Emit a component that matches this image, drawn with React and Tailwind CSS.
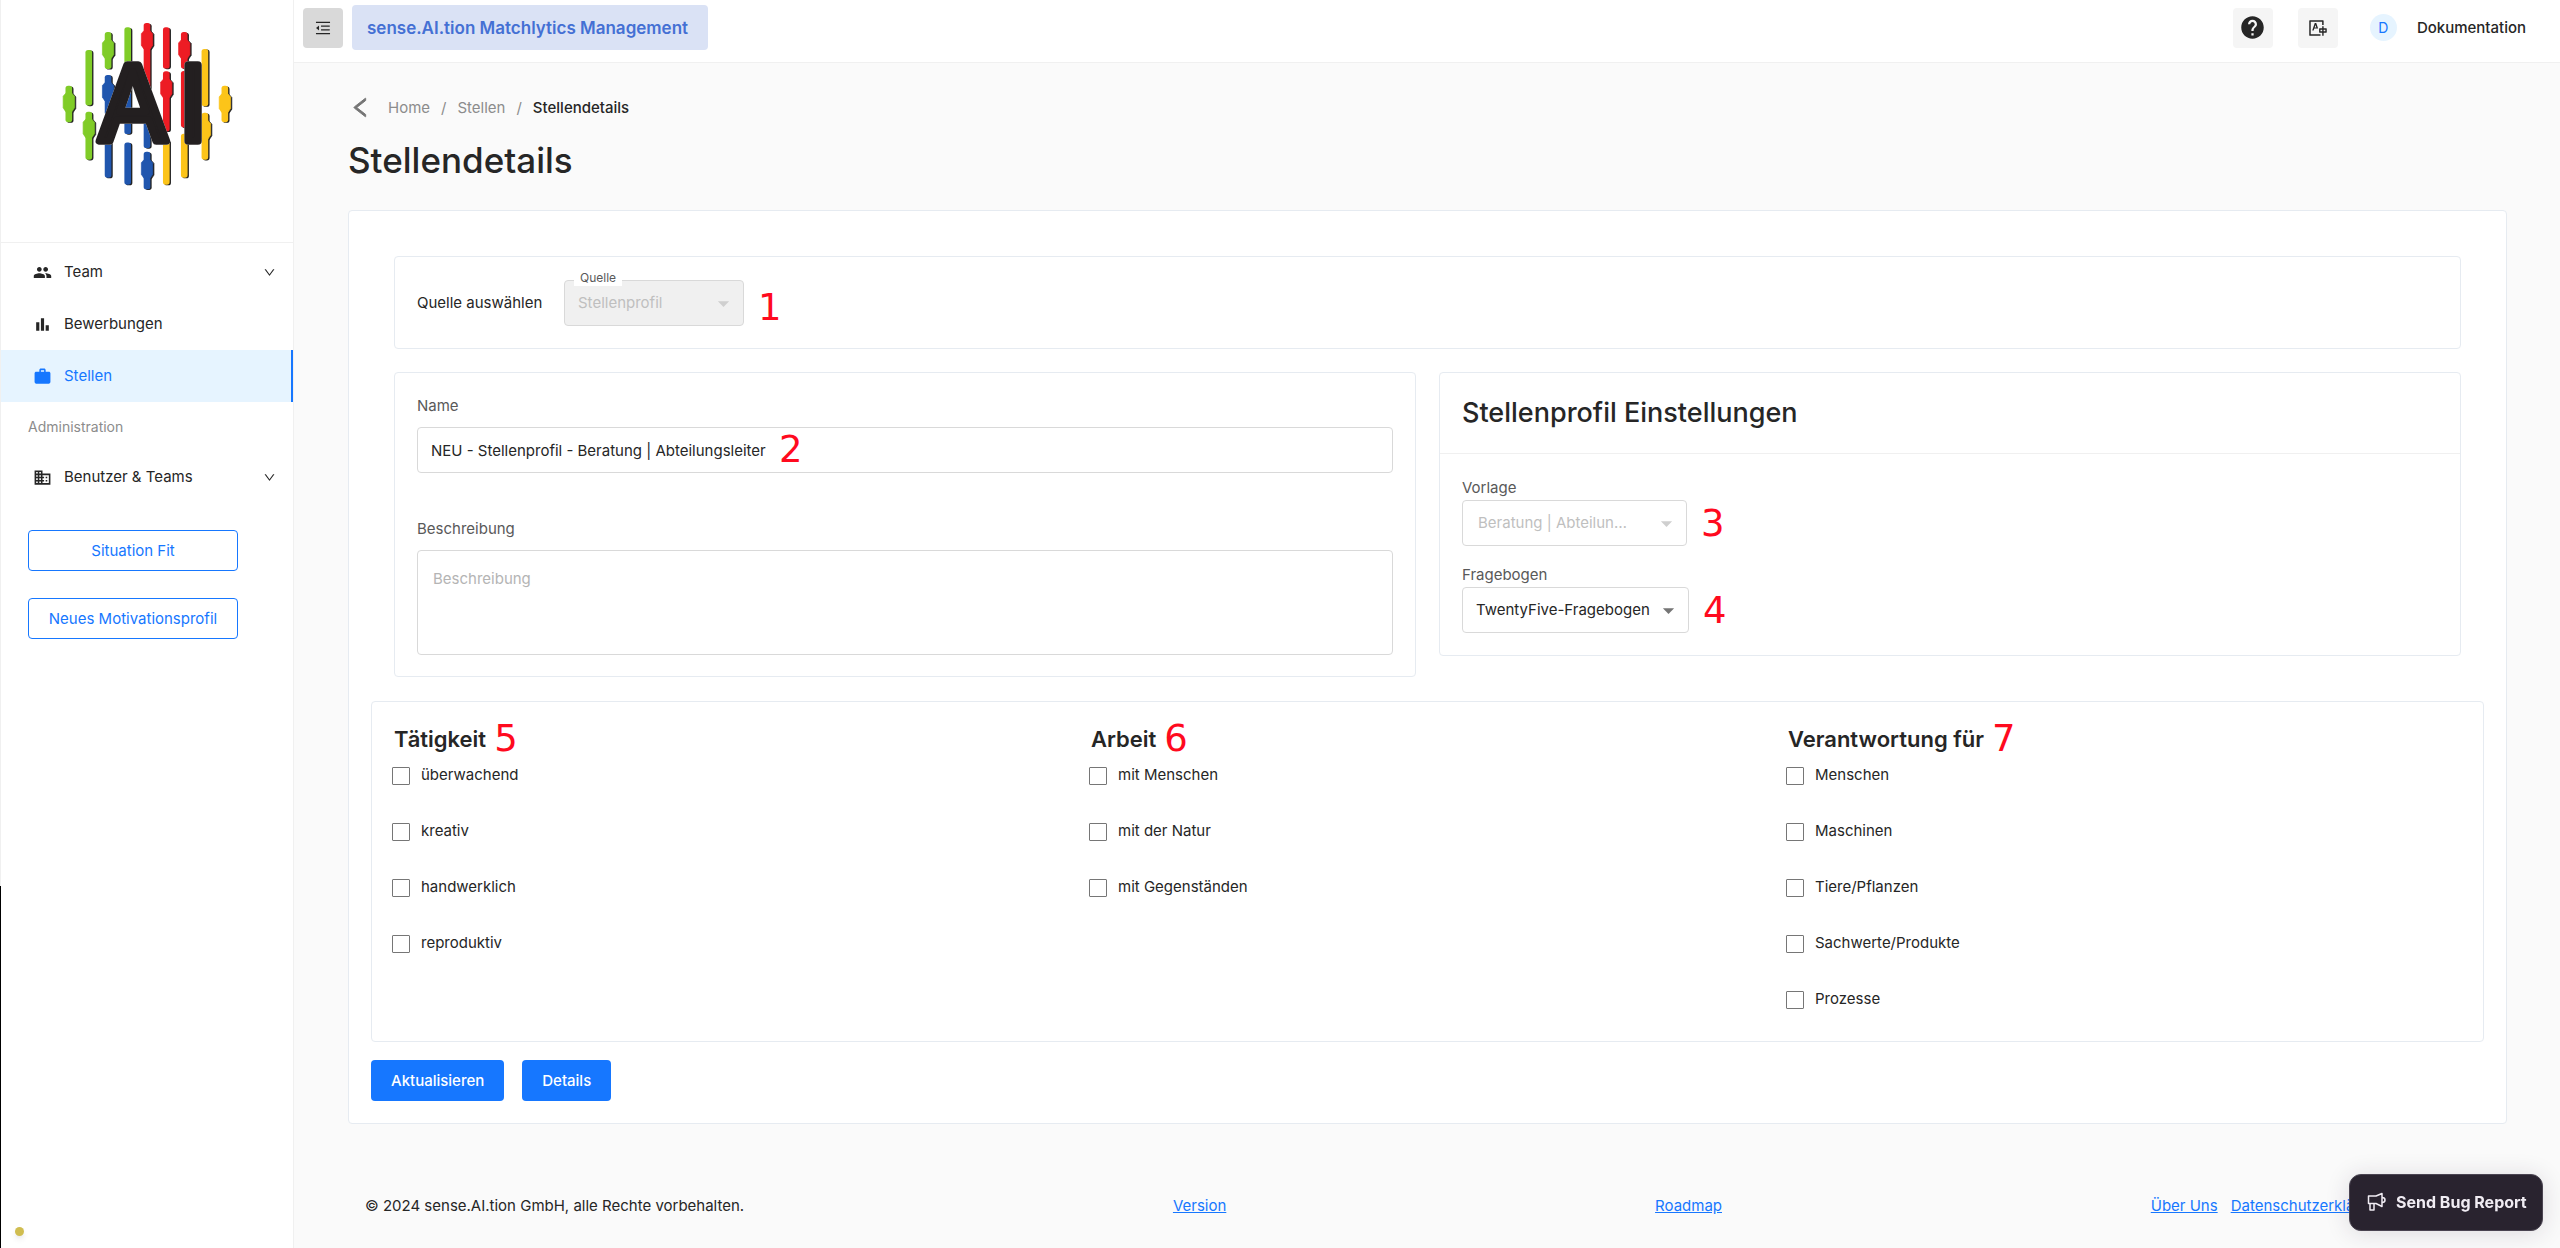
import { useState } from "react";
import {
  MdPeople,
  MdBarChart,
  MdWork,
  MdOutlineDomain,
  MdHelp,
  MdArrowDropDown,
} from "react-icons/md";
import { AiOutlineMenuFold, AiOutlineDown, AiOutlineTranslation, AiOutlineLeft } from "react-icons/ai";

const GREEN = "#80cc28";
const RED = "#ed1c24";
const BLUE = "#2056ae";
const YELLOW = "#fcc419";

// x, top, bottom, color, top of the wide part (persons only)
const logoBars = [
  [206, 258, 367, GREEN, 280],
  [266, 150, 317, GREEN],
  [266, 336, 480, GREEN, 358],
  [324, 96, 207, GREEN, 120],
  [324, 225, 345, BLUE, 248],
  [324, 400, 534, BLUE],
  [383, 82, 200, GREEN],
  [383, 240, 403, BLUE],
  [383, 428, 555, BLUE],
  [441, 69, 270, RED, 92],
  [441, 330, 445, BLUE],
  [441, 456, 569, BLUE, 480],
  [499, 82, 206, RED],
  [499, 214, 395, RED, 238],
  [499, 420, 555, YELLOW],
  [553, 96, 206, RED, 120],
  [553, 213, 383, RED],
  [553, 402, 534, YELLOW],
  [615, 147, 319, YELLOW],
  [615, 339, 480, YELLOW, 362],
  [675, 258, 367, YELLOW, 282],
];

function LogoShapes({ shadow }) {
  return logoBars.map(([x, top, bottom, color, body], i) => (
    <g key={i} fill={shadow ? "#222" : color}>
      <rect x={x - 10} y={top} width="20" height={bottom - top} rx="8" />
      {body && (
        <path
          d={`M${x - 9} ${body}h18l8 9v35l-8 12h-18l-8-12v-35z`}
          stroke={shadow ? "#222" : color}
          strokeWidth="2"
          strokeLinejoin="round"
        />
      )}
    </g>
  ));
}

function Logo() {
  return (
    <svg viewBox="180 60 525 520" className="h-[173px] w-[175px]" role="img" aria-label="AI">
      <g transform="translate(4 2)">
        <LogoShapes shadow />
      </g>
      <LogoShapes />
      <text
        x="290 537"
        y="425"
        fontSize="315"
        fontWeight="400"
        fill="#231f20"
        stroke="#231f20"
        strokeWidth="23"
        strokeLinejoin="round"
        className="font-['Inter'] drop-shadow-[0_0_2px_white]"
      >
        AI
      </text>
    </svg>
  );
}

function Marker({ children, className = "" }) {
  return (
    <span className={`font-['DejaVu_Sans'] text-[37px] leading-none text-[#ff0a1e] ${className}`}>
      {children}
    </span>
  );
}

function NavItem({ icon: Icon, label, active, expandable }) {
  return (
    <a
      href="#"
      className={`flex h-[52px] items-center pr-[17px] pl-8 ${
        active ? "border-r-2 border-[#1677ff] bg-[#e6f4ff] text-[#1677ff]" : "text-[#262626]"
      }`}
    >
      <Icon size={19} />
      <span className="ml-3 flex-1">{label}</span>
      {expandable && <AiOutlineDown size={13} className="text-[#262626]" />}
    </a>
  );
}

function Sidebar() {
  return (
    <aside className="flex shrink-0">
      <div className="flex w-px flex-col">
        <div className="h-[71%] bg-[#f0f0f0]" />
        <div className="flex-1 bg-black" />
      </div>
      <div className="flex w-[293px] flex-col border-r border-[#f0f0f0] bg-white">
        <div className="flex h-[243px] justify-center border-b border-[#f0f0f0] pt-5">
          <Logo />
        </div>
        <nav className="pt-[3px]">
          <NavItem icon={MdPeople} label="Team" expandable />
          <NavItem icon={MdBarChart} label="Bewerbungen" />
          <NavItem icon={MdWork} label="Stellen" active />
          <p className="flex h-[49px] items-center pl-[27px] text-[14px] text-[#8c8c8c]">Administration</p>
          <NavItem icon={MdOutlineDomain} label="Benutzer & Teams" expandable />
        </nav>
        <div className="mt-[27px] ml-[27px] flex w-[210px] flex-col gap-[27px] self-start">
          <button type="button" className="h-[41px] rounded border border-[#1677ff] text-[#1677ff]">
            Situation Fit
          </button>
          <button type="button" className="h-[41px] rounded border border-[#1677ff] text-[#1677ff]">
            Neues Motivationsprofil
          </button>
        </div>
        <div className="mt-auto mb-3 ml-[14px] size-[9px] rounded-full bg-[#d0bd50] shadow-md" />
      </div>
    </aside>
  );
}

function Header() {
  return (
    <header className="flex h-[63px] items-center border-b border-[#f0f0f0] bg-white pr-[34px] pb-[7px] pl-[9px]">
      <button type="button" aria-label="Menü" className="flex size-10 items-center justify-center rounded bg-[#d9d9d9]">
        <AiOutlineMenuFold size={18} />
      </button>
      <div className="ml-[9px] flex h-[45px] items-center rounded bg-[#dae2f5] pr-5 pl-[15px] text-[17px] font-semibold text-[#4470d4]">
        sense.AI.tion Matchlytics Management
      </div>
      <div className="ml-auto flex items-center">
        <button type="button" aria-label="Hilfe" className="flex size-10 items-center justify-center rounded bg-[#f5f5f5]">
          <MdHelp size={27} />
        </button>
        <button type="button" aria-label="Sprache" className="ml-[25px] flex size-10 items-center justify-center rounded bg-[#f5f5f5]">
          <AiOutlineTranslation size={20} />
        </button>
        <span className="ml-8 flex size-[27px] items-center justify-center rounded-full bg-[#e6f4ff] text-[14px] text-[#1677ff]">
          D
        </span>
        <span className="ml-5 font-medium">Dokumentation</span>
      </div>
    </header>
  );
}

function SelectBox({ id, option, disabled, className = "", selectClass = "" }) {
  return (
    <div className={`relative ${className}`}>
      <select
        id={id}
        disabled={disabled}
        className={`h-[46px] w-full appearance-none truncate rounded border border-[#d9d9d9] opacity-100 ${selectClass}`}
      >
        <option>{option}</option>
      </select>
      <MdArrowDropDown
        size={27}
        className={`pointer-events-none absolute top-[10px] right-[7px] ${disabled ? "text-[#cfcfcf]" : "text-[#757575]"}`}
      />
    </div>
  );
}

function SourceCard() {
  return (
    <section className="flex items-center rounded border border-[#e6ebf1] px-[22px] pt-[23px] pb-[22px]">
      <label htmlFor="quelle" className="w-[147px]">
        Quelle auswählen
      </label>
      <div className="relative">
        <SelectBox
          id="quelle"
          option="Stellenprofil"
          disabled
          className="w-[180px]"
          selectClass="bg-[#f0f0f0] pl-[13px] pr-9 text-[#bfbfbf]"
        />
        <span className="absolute -top-[10px] left-[10px] bg-white px-[6px] text-[12px] leading-4 text-[#595959]">
          Quelle
        </span>
      </div>
      <Marker className="mt-2 ml-[14px]">1</Marker>
    </section>
  );
}

function DetailsCard() {
  return (
    <section className="rounded border border-[#e6ebf1] px-[22px] pt-[21px] pb-[21px]">
      <label htmlFor="name" className="block text-[#595959]">
        Name
      </label>
      <div className="relative mt-[9px]">
        <input
          id="name"
          type="text"
          defaultValue="NEU - Stellenprofil - Beratung | Abteilungsleiter"
          className="h-[46px] w-full rounded border border-[#d9d9d9] px-[13px]"
        />
        <Marker className="absolute top-1 left-[362px]">2</Marker>
      </div>
      <label htmlFor="beschreibung" className="mt-[44px] block text-[#595959]">
        Beschreibung
      </label>
      <textarea
        id="beschreibung"
        placeholder="Beschreibung"
        className="mt-[9px] block h-[105px] w-full resize-none rounded border border-[#d9d9d9] px-[15px] py-4 placeholder:text-[#b4b4b4]"
      />
    </section>
  );
}

function SettingsCard() {
  return (
    <section className="self-start rounded border border-[#e6ebf1]">
      <h2 className="border-b border-[#f0f0f0] px-[22px] py-6 text-[27px] leading-8 font-medium">
        Stellenprofil Einstellungen
      </h2>
      <div className="px-[22px] py-[22px]">
        <label htmlFor="vorlage" className="block text-[#595959]">
          Vorlage
        </label>
        <div className="flex items-center">
          <SelectBox
            id="vorlage"
            option="Beratung | Abteilungsleiter"
            disabled
            className="w-[225px]"
            selectClass="bg-white pl-[15px] pr-[52px] text-[#bfbfbf]"
          />
          <Marker className="ml-[14px]">3</Marker>
        </div>
        <label htmlFor="fragebogen" className="mt-[17px] block text-[#595959]">
          Fragebogen
        </label>
        <div className="flex items-center">
          <SelectBox
            id="fragebogen"
            option="TwentyFive-Fragebogen"
            className="w-[227px]"
            selectClass="bg-white pl-[13px] pr-8"
          />
          <Marker className="ml-[14px]">4</Marker>
        </div>
      </div>
    </section>
  );
}

const groups = [
  { title: "Tätigkeit", marker: "5", options: ["überwachend", "kreativ", "handwerklich", "reproduktiv"] },
  { title: "Arbeit", marker: "6", options: ["mit Menschen", "mit der Natur", "mit Gegenständen"] },
  {
    title: "Verantwortung für",
    marker: "7",
    options: ["Menschen", "Maschinen", "Tiere/Pflanzen", "Sachwerte/Produkte", "Prozesse"],
  },
];

function CheckboxGroups() {
  const [checked, setChecked] = useState({});

  return (
    <section className="mt-6 grid grid-cols-3 rounded border border-[#e6ebf1] pt-[18px] pb-1 pl-5">
      {groups.map((group) => (
        <div key={group.title}>
          <h3 className="flex h-[37px] items-center gap-2 pl-[2px] text-[22px] font-semibold">
            {group.title}
            <Marker className="font-normal">{group.marker}</Marker>
          </h3>
          {group.options.map((option) => {
            const key = `${group.title}-${option}`;
            return (
              <label key={key} className="flex h-14 items-start gap-[11px] pt-2 leading-5">
                <input
                  type="checkbox"
                  checked={!!checked[key]}
                  onChange={(e) => setChecked({ ...checked, [key]: e.target.checked })}
                  className="mt-[2px] size-[18px] appearance-none rounded-[1px] border border-[#767676] bg-white checked:bg-[#1677ff]"
                />
                {option}
              </label>
            );
          })}
        </div>
      ))}
    </section>
  );
}

function Footer() {
  return (
    <footer className="mt-auto flex justify-between px-[17px] pb-[30px]">
      <span>© 2024 sense.AI.tion GmbH, alle Rechte vorbehalten.</span>
      <a href="#" className="text-[#1677ff] underline">Version</a>
      <a href="#" className="text-[#1677ff] underline">Roadmap</a>
      <div className="flex gap-[13px] pr-[103px]">
        <a href="#" className="text-[#1677ff] underline">Über Uns</a>
        <a href="#" className="text-[#1677ff] underline">Datenschutzerklärung</a>
      </div>
    </footer>
  );
}

function BugReportButton() {
  return (
    <button
      type="button"
      className="fixed right-[17px] bottom-[17px] flex h-[57px] w-[194px] items-center gap-[9px] rounded-xl border border-[#4a4451] bg-[#29232f] pb-[2px] pl-[17px] text-[16px] font-bold text-[#f0ecf3] shadow-[0_2px_24px_rgba(40,30,60,0.14)]"
    >
      <svg viewBox="0 0 20 20" className="size-5" fill="none" stroke="currentColor" strokeWidth="1.5" strokeLinejoin="round">
        <path d="M1.5 4h7.500l6-2.500v13L9 11.500H1.500z" />
        <path d="M3 11.500v6.500h4v-6.500" />
        <path d="M15 5.500c4 0 4 5 0 5" />
      </svg>
      Send Bug Report
    </button>
  );
}

export default function App() {
  return (
    <div className="flex min-h-screen bg-[#fafafa] font-['Inter',sans-serif] text-[15px] leading-6 text-[#262626]">
      <Sidebar />
      <div className="flex min-w-0 flex-1 flex-col">
        <Header />
        <main className="flex flex-1 flex-col pt-8 pr-[53px] pl-[54px]">
          <nav className="flex items-center gap-[11px] text-[#8c8c8c]">
            <button type="button" aria-label="Zurück" className="mr-1 text-[#757575]">
              <AiOutlineLeft size={25} stroke="currentColor" strokeWidth={40} />
            </button>
            <a href="#">Home</a>
            <span>/</span>
            <a href="#">Stellen</a>
            <span>/</span>
            <span className="font-medium text-[#262626]">Stellendetails</span>
          </nav>
          <h1 className="mt-5 text-[35px] leading-10 font-medium">Stellendetails</h1>
          <div className="mt-[30px] rounded border border-[#e6ebf1] bg-white px-[22px] pt-[45px] pb-[22px]">
            <div className="flex flex-col gap-[23px] px-[23px]">
              <SourceCard />
              <div className="grid grid-cols-2 gap-[23px]">
                <DetailsCard />
                <SettingsCard />
              </div>
            </div>
            <CheckboxGroups />
            <div className="mt-[18px] flex gap-[18px]">
              <button type="button" className="h-[41px] rounded bg-[#1677ff] px-5 font-medium text-white">
                Aktualisieren
              </button>
              <button type="button" className="h-[41px] rounded bg-[#1677ff] px-5 font-medium text-white">
                Details
              </button>
            </div>
          </div>
          <Footer />
        </main>
      </div>
      <BugReportButton />
    </div>
  );
}
